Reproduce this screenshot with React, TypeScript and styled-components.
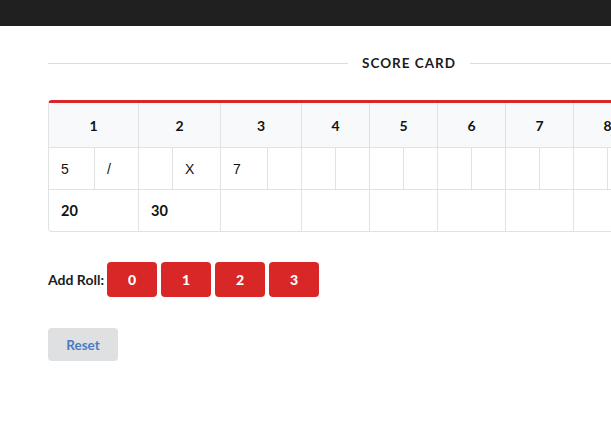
import React from "react";
import styled, { createGlobalStyle } from "styled-components";

const Global = createGlobalStyle`
  html, body { margin: 0; padding: 0; background: #fff; overflow: hidden; }
  body { font-family: Lato, "Liberation Sans", Arial, sans-serif; color: rgba(0,0,0,0.87); }
  * { box-sizing: border-box; }
`;

const TopBar = styled.div`
  height: 26px;
  background: #202020;
`;

const Container = styled.main`
  width: 722px;
  margin-left: 48px;
  padding-top: 25px;
`;

const Divider = styled.div`
  display: flex;
  align-items: center;
  height: 24px;
  margin-bottom: 25px;
`;

const Line = styled.span`
  flex: 1;
  height: 1px;
  background: #dcdcdc;
`;

const Title = styled.h2`
  margin: 0 14px;
  font-family: Lato, sans-serif;
  font-weight: 700;
  font-size: 13.5px;
  letter-spacing: 1px;
  color: #1b1c1d;
`;

const Table = styled.table`
  table-layout: fixed;
  border-collapse: separate;
  border-spacing: 0;
  width: 722px;
  border: 1px solid #e1e2e3;
  border-top: 3px solid #d92727;
  border-radius: 4px;
  font-family: "Liberation Sans", Arial, sans-serif;
  font-size: 14px;
  color: #111;
`;

const HeadCell = styled.th<{ $first?: boolean }>`
  height: 44px;
  padding: 0;
  background: #f8f9fa;
  border-left: ${(p) => (p.$first ? "none" : "1px solid #e1e2e3")};
  font-family: Lato, sans-serif;
  font-weight: 700;
  font-size: 14px;
  text-align: center;
  vertical-align: middle;
`;

const Cell = styled.td<{ $first?: boolean; $score?: boolean }>`
  height: 42px;
  padding: 0 0 0 12px;
  border-top: 1px solid #e1e2e3;
  border-left: ${(p) => (p.$first ? "none" : "1px solid #e1e2e3")};
  vertical-align: middle;
  text-align: left;
  font-family: ${(p) => (p.$score ? "Lato, sans-serif" : "inherit")};
  font-weight: ${(p) => (p.$score ? 700 : 400)};
  font-size: ${(p) => (p.$score ? "14.5px" : "14px")};
`;

const RollRow = styled.div`
  display: flex;
  align-items: center;
  gap: 4px;
  margin-top: 30px;
`;

const Label = styled.span`
  font-family: Lato, sans-serif;
  font-weight: 700;
  font-size: 14px;
  color: #1b1c1d;
  margin-right: -1px;
`;

const RollButton = styled.button`
  width: 50px;
  height: 35px;
  border: none;
  border-radius: 4px;
  background: #d92728;
  color: #fff;
  font-family: Lato, sans-serif;
  font-weight: 900;
  font-size: 14px;
  cursor: pointer;
  padding: 0;
`;

const ResetButton = styled.button`
  display: block;
  margin-top: 31px;
  width: 70px;
  height: 33px;
  border: none;
  border-radius: 4px;
  background: #dfe0e2;
  color: #4a7cc4;
  font-family: Lato, sans-serif;
  font-weight: 700;
  font-size: 13.5px;
  padding: 0;
  cursor: pointer;
`;

const frameWidths: [number, number][] = [
  [45, 44],
  [34, 48],
  [47, 34],
  [34, 34],
  [34, 34],
  [34, 34],
  [34, 34],
  [34, 34],
  [34, 34],
  [45, 45],
];

const rolls: string[][] = [["5", "/"], ["", "X"], ["7", ""]];
const scores = ["20", "30"];

export default function App() {
  return (
    <>
      <Global />
      <TopBar />
      <Container>
        <Divider>
          <Line />
          <Title>SCORE CARD</Title>
          <Line />
        </Divider>
        <Table>
          <colgroup>
            {frameWidths.flatMap(([a, b], i) => [
              <col key={`a${i}`} style={{ width: a }} />,
              <col key={`b${i}`} style={{ width: b }} />,
            ])}
          </colgroup>
          <thead>
            <tr>
              {frameWidths.map((_, i) => (
                <HeadCell key={i} colSpan={2} $first={i === 0}>
                  {i + 1}
                </HeadCell>
              ))}
            </tr>
          </thead>
          <tbody>
            <tr>
              {frameWidths.flatMap((_, i) => [
                <Cell key={`r${i}a`} $first={i === 0}>
                  {rolls[i]?.[0] ?? ""}
                </Cell>,
                <Cell key={`r${i}b`}>{rolls[i]?.[1] ?? ""}</Cell>,
              ])}
            </tr>
            <tr>
              {frameWidths.map((_, i) => (
                <Cell key={i} colSpan={2} $first={i === 0} $score>
                  {scores[i] ?? ""}
                </Cell>
              ))}
            </tr>
          </tbody>
        </Table>
        <RollRow>
          <Label>Add Roll:</Label>
          {[0, 1, 2, 3].map((n) => (
            <RollButton key={n}>{n}</RollButton>
          ))}
        </RollRow>
        <ResetButton>Reset</ResetButton>
      </Container>
    </>
  );
}
